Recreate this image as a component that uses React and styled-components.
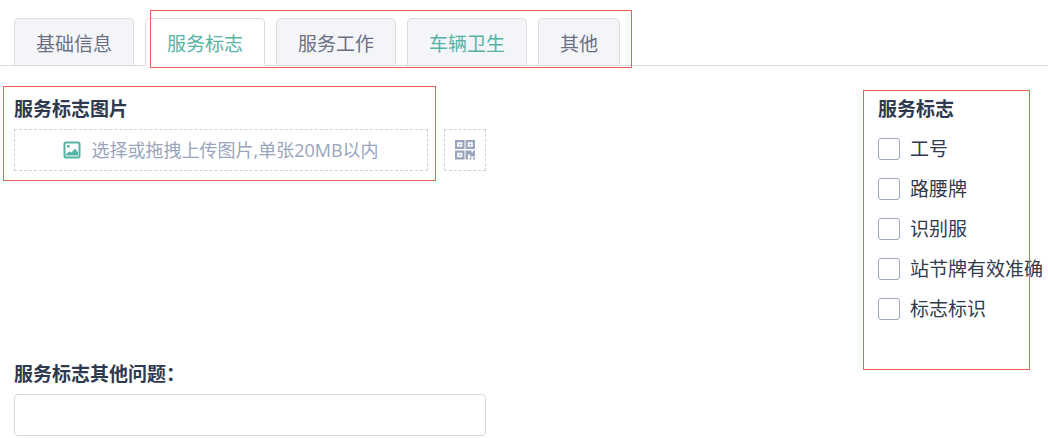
import React, { useState } from 'react'
import styled, { createGlobalStyle } from 'styled-components'

const GlobalStyle = createGlobalStyle`
  * {
    box-sizing: border-box;
  }

  body {
    margin: 0;
    background: #fff;
    color: #303a4e;
    font-family: 'Open Sans', 'Noto Sans CJK SC', sans-serif;
    font-size: 19px;
    line-height: 40px;
  }

  button, input {
    font: inherit;
  }
`

const TabBar = styled.div`
  display: flex;
  gap: 11px;
  padding: 18px 14px 0;
  border-bottom: 1px solid #d9d9d9;
`

const TabGroup = styled.div`
  position: relative;
  display: flex;
  gap: 11px;
`

const Tab = styled.button`
  height: 48px;
  margin-bottom: -1px;
  padding: 4px 21px 0;
  border: 1px solid #dcdcdc;
  border-bottom-color: ${({ $active }) => ($active ? '#fff' : '#d9d9d9')};
  border-radius: 5px 5px 0 0;
  background: ${({ $active }) => ($active ? '#fff' : '#f4f5f9')};
  color: ${({ $active, $highlight }) => ($active || $highlight ? '#55b3a6' : '#697083')};
  white-space: nowrap;
  cursor: pointer;
`

const Content = styled.main`
  display: grid;
  grid-template-columns: minmax(0, 472px) 1fr 170px;
  row-gap: 25px;
  padding: 23px 0 2px 14px;
`

const Section = styled.section`
  position: relative;
`

const Checks = styled(Section)`
  grid-column: 3;
`

const Title = styled.h2`
  margin: 0;
  font-size: 19px;
  font-weight: 700;
`

const FieldLabel = styled.label`
  display: block;
  font-weight: 700;
`

const UploadRow = styled.div`
  display: flex;
  gap: 16px;
`

const DashedButton = styled.button`
  display: flex;
  align-items: center;
  justify-content: center;
  gap: 10px;
  height: 42px;
  padding: 0;
  border: 1px dashed #d2d2d2;
  background: #fff;
  color: #98a5bd;
  font-size: 18px;
  white-space: nowrap;
  cursor: pointer;
`

const UploadButton = styled(DashedButton)`
  flex: 1;
`

const QrButton = styled(DashedButton)`
  width: 42px;
`

const CheckRow = styled.label`
  display: flex;
  align-items: center;
  gap: 10px;
  height: 40px;
  white-space: nowrap;
  cursor: pointer;
`

const Checkbox = styled.input`
  appearance: none;
  flex: none;
  width: 22px;
  height: 22px;
  margin: 0;
  border: 1px solid #9ca9c0;
  border-radius: 3px;
  background: #fff;

  &:checked {
    background: #55b3a6;
    border-color: #55b3a6;
  }
`

const TextInput = styled.input`
  display: block;
  width: 100%;
  height: 42px;
  padding: 0 12px;
  border: 1px solid #d9d9d9;
  border-radius: 4px;
  color: inherit;
`

// red outline that marks the parts under review
const Marker = styled.div`
  position: absolute;
  inset: ${({ $inset }) => $inset};
  border: 1px solid #ec5f58;
  pointer-events: none;
`

const ImageIcon = () => (
  <svg width="18" height="18" viewBox="0 0 18 18" fill="none" aria-hidden="true">
    <rect x="1.500" y="1.500" width="15" height="15" rx="1.500" stroke="#55b3a6" strokeWidth="2" />
    <path d="M4 4h2.500v2.500H4z" fill="#55b3a6" />
    <path d="M3 14.500V13l3.600-2.600 2 1.200L12 7.500l3 3.800v3.200z" fill="#55b3a6" />
  </svg>
)

const QrIcon = () => (
  <svg width="20" height="20" viewBox="0 0 20 20" fill="#98a5bd" aria-hidden="true">
    <path fillRule="evenodd" d="M0 0h9.500v9H0zM2.200 2.200v4.600h5.100V2.200z" />
    <path fillRule="evenodd" d="M10.500 0H20v9h-9.500zM12.700 2.200v4.600h5.100V2.200z" />
    <path fillRule="evenodd" d="M0 10.500h9.500v9H0zM2.200 12.700v4.600h5.100v-4.600z" />
    <path d="M4 3.700h1.600v1.600H4zM14.500 3.700h1.600v1.600h-1.600zM4 14.200h1.600v1.600H4z" />
    <path d="M10.500 10.500h6v2h1.500v-2h2v6h-5v-2h-2v5h-2.500zM14.500 17.500h2v2h-2zM18 17.500h2v2h-2z" />
  </svg>
)

const reviewTabs = [
  { name: '服务标志' },
  { name: '服务工作' },
  { name: '车辆卫生', highlight: true },
  { name: '其他' },
]

const checks = ['工号', '路腰牌', '识别服', '站节牌有效准确', '标志标识']

const App = () => {
  const [activeTab, setActiveTab] = useState('服务标志')

  const renderTab = ({ name, highlight }) => (
    <Tab
      key={name}
      type="button"
      role="tab"
      aria-selected={activeTab === name}
      $active={activeTab === name}
      $highlight={highlight}
      onClick={() => setActiveTab(name)}
    >
      {name}
    </Tab>
  )

  return (
    <>
      <GlobalStyle />
      <TabBar role="tablist">
        {renderTab({ name: '基础信息' })}
        <TabGroup role="presentation">
          {reviewTabs.map(renderTab)}
          <Marker $inset="-8px -12px -3px 5px" />
        </TabGroup>
      </TabBar>

      <Content>
        <Section>
          <Title>服务标志图片</Title>
          <UploadRow>
            <UploadButton type="button">
              <ImageIcon />
              选择或拖拽上传图片,单张20MB以内
            </UploadButton>
            <QrButton type="button" aria-label="二维码">
              <QrIcon />
            </QrButton>
          </UploadRow>
          <Marker $inset="-3px 50px 148px -11px" />
        </Section>

        <Checks>
          <Title>服务标志</Title>
          {checks.map((name) => (
            <CheckRow key={name}>
              <Checkbox type="checkbox" name={name} />
              {name}
            </CheckRow>
          ))}
          <Marker $inset="1px 18px -41px -15px" />
        </Checks>

        <Section>
          <FieldLabel htmlFor="other">服务标志其他问题：</FieldLabel>
          <TextInput id="other" type="text" />
        </Section>
      </Content>
    </>
  )
}

export default App
